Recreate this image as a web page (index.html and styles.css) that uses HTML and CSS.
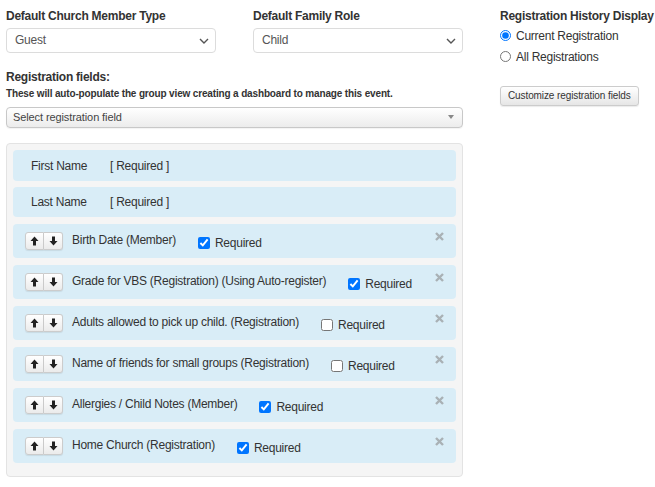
FILE: index.html
```html
<!DOCTYPE html>
<html>
<head>
<meta charset="utf-8">
<link rel="stylesheet" href="styles.css">
</head>
<body>
<div class="page">
  <div class="left">
    <div class="top-row">
      <div class="group">
        <div class="label">Default Church Member Type</div>
        <div class="select">Guest<svg class="chev" width="10" height="6" viewBox="0 0 10 6"><path d="M1 1l4 4 4-4" fill="none" stroke="#555" stroke-width="1.4"/></svg></div>
      </div>
      <div class="group">
        <div class="label">Default Family Role</div>
        <div class="select">Child<svg class="chev" width="10" height="6" viewBox="0 0 10 6"><path d="M1 1l4 4 4-4" fill="none" stroke="#555" stroke-width="1.4"/></svg></div>
      </div>
    </div>
    <div class="label reg-label">Registration fields:</div>
    <div class="help">These will auto-populate the group view creating a dashboard to manage this event.</div>
    <div class="chosen">Select registration field<span class="tri"></span></div>
    <div class="panel">
      <div class="row fixed"><span class="fname">First Name</span><span>[ Required ]</span></div>
      <div class="row fixed second"><span class="fname">Last Name</span><span>[ Required ]</span></div>

      <div class="row sort">
        <div class="btns"><span class="btn"><svg width="9" height="10" viewBox="0 0 9 10"><path d="M4.5 0.5L0.5 5H3V9.5H6V5H8.5Z" fill="#222"/></svg></span><span class="btn"><svg width="9" height="10" viewBox="0 0 9 10"><path d="M4.5 9.5L0.5 5H3V0.5H6V5H8.5Z" fill="#222"/></svg></span></div>
        <span class="name">Birth Date (Member)</span>
        <label class="req"><input type="checkbox" checked>Required</label>
        <svg class="close" width="9" height="9" viewBox="0 0 9 9"><path d="M1 1L8 8M8 1L1 8" stroke="#a9b1b5" stroke-width="2.4"/></svg>
      </div>
      <div class="row sort">
        <div class="btns"><span class="btn"><svg width="9" height="10" viewBox="0 0 9 10"><path d="M4.5 0.5L0.5 5H3V9.5H6V5H8.5Z" fill="#222"/></svg></span><span class="btn"><svg width="9" height="10" viewBox="0 0 9 10"><path d="M4.5 9.5L0.5 5H3V0.5H6V5H8.5Z" fill="#222"/></svg></span></div>
        <span class="name">Grade for VBS (Registration) (Using Auto-register)</span>
        <label class="req"><input type="checkbox" checked>Required</label>
        <svg class="close" width="9" height="9" viewBox="0 0 9 9"><path d="M1 1L8 8M8 1L1 8" stroke="#a9b1b5" stroke-width="2.4"/></svg>
      </div>
      <div class="row sort">
        <div class="btns"><span class="btn"><svg width="9" height="10" viewBox="0 0 9 10"><path d="M4.5 0.5L0.5 5H3V9.5H6V5H8.5Z" fill="#222"/></svg></span><span class="btn"><svg width="9" height="10" viewBox="0 0 9 10"><path d="M4.5 9.5L0.5 5H3V0.5H6V5H8.5Z" fill="#222"/></svg></span></div>
        <span class="name">Adults allowed to pick up child. (Registration)</span>
        <label class="req"><input type="checkbox">Required</label>
        <svg class="close" width="9" height="9" viewBox="0 0 9 9"><path d="M1 1L8 8M8 1L1 8" stroke="#a9b1b5" stroke-width="2.4"/></svg>
      </div>
      <div class="row sort">
        <div class="btns"><span class="btn"><svg width="9" height="10" viewBox="0 0 9 10"><path d="M4.5 0.5L0.5 5H3V9.5H6V5H8.5Z" fill="#222"/></svg></span><span class="btn"><svg width="9" height="10" viewBox="0 0 9 10"><path d="M4.5 9.5L0.5 5H3V0.5H6V5H8.5Z" fill="#222"/></svg></span></div>
        <span class="name">Name of friends for small groups (Registration)</span>
        <label class="req"><input type="checkbox">Required</label>
        <svg class="close" width="9" height="9" viewBox="0 0 9 9"><path d="M1 1L8 8M8 1L1 8" stroke="#a9b1b5" stroke-width="2.4"/></svg>
      </div>
      <div class="row sort">
        <div class="btns"><span class="btn"><svg width="9" height="10" viewBox="0 0 9 10"><path d="M4.5 0.5L0.5 5H3V9.5H6V5H8.5Z" fill="#222"/></svg></span><span class="btn"><svg width="9" height="10" viewBox="0 0 9 10"><path d="M4.5 9.5L0.5 5H3V0.5H6V5H8.5Z" fill="#222"/></svg></span></div>
        <span class="name">Allergies / Child Notes (Member)</span>
        <label class="req"><input type="checkbox" checked>Required</label>
        <svg class="close" width="9" height="9" viewBox="0 0 9 9"><path d="M1 1L8 8M8 1L1 8" stroke="#a9b1b5" stroke-width="2.4"/></svg>
      </div>
      <div class="row sort">
        <div class="btns"><span class="btn"><svg width="9" height="10" viewBox="0 0 9 10"><path d="M4.5 0.5L0.5 5H3V9.5H6V5H8.5Z" fill="#222"/></svg></span><span class="btn"><svg width="9" height="10" viewBox="0 0 9 10"><path d="M4.5 9.5L0.5 5H3V0.5H6V5H8.5Z" fill="#222"/></svg></span></div>
        <span class="name">Home Church (Registration)</span>
        <label class="req"><input type="checkbox" checked>Required</label>
        <svg class="close" width="9" height="9" viewBox="0 0 9 9"><path d="M1 1L8 8M8 1L1 8" stroke="#a9b1b5" stroke-width="2.4"/></svg>
      </div>
    </div>
  </div>
  <div class="right">
    <div class="label">Registration History Display</div>
    <label class="radio"><input type="radio" name="h" checked>Current Registration</label>
    <label class="radio"><input type="radio" name="h">All Registrations</label>
    <div class="button">Customize registration fields</div>
  </div>
</div>
</body>
</html>
```

FILE: styles.css
```css
* { box-sizing: border-box; }
body {
  margin: 0;
  font-family: "Liberation Sans", Arial, sans-serif;
  color: #333;
  font-size: 12px;
  letter-spacing: -0.25px;
  background: #fff;
}
.page {
  display: flex;
  padding: 7px 0 0 6px;
  gap: 37px;
}
.left { width: 457px; flex: none; }
.right { width: 155px; flex: none; }
.top-row {
  display: flex;
  gap: 37px;
}
.group { width: 210px; }
.label {
  font-weight: bold;
  font-size: 12px;
  line-height: 18px;
  margin-bottom: 3px;
  white-space: nowrap;
}
.select {
  position: relative;
  height: 25px;
  border: 1px solid #dcdcdc;
  border-radius: 4px;
  padding: 0 0 0 8px;
  line-height: 23px;
  color: #555;
  font-size: 12px;
}
.chev { position: absolute; right: 6px; top: 9px; }
.reg-label { margin-top: 15px; margin-bottom: 1px; }
.help {
  font-weight: bold;
  font-size: 10px;
  letter-spacing: -0.15px;
  line-height: 14px;
  margin-bottom: 6px;
}
.chosen {
  position: relative;
  height: 21px;
  border: 1px solid #c8c8c8;
  border-radius: 4px;
  background: linear-gradient(#ffffff, #ececec);
  font-size: 11px;
  letter-spacing: -0.1px;
  line-height: 19px;
  padding-left: 6px;
  color: #444;
  box-shadow: 0 1px 1px rgba(0,0,0,0.05);
}
.tri {
  position: absolute;
  right: 8px;
  top: 7px;
  width: 0; height: 0;
  border-left: 3px solid transparent;
  border-right: 3px solid transparent;
  border-top: 4px solid #888;
}
.panel {
  margin-top: 15px;
  width: 457px;
  border: 1px solid #e3e3e3;
  border-radius: 4px;
  background: #f5f5f5;
  padding: 6px 6px 6px 6px;
}
.row {
  position: relative;
  background: #d9edf7;
  border-radius: 4px;
  margin-bottom: 7px;
}
.fixed {
  height: 31px;
  padding-left: 18px;
  display: flex;
  align-items: center;
  margin-bottom: 6px;
}
.fixed.second { height: 30px; margin-bottom: 7px; }
.fname { width: 79px; }
.sort {
  height: 34px;
  display: flex;
  align-items: flex-start;
  padding: 8px 0 0 12px;
}
.btns { display: flex; }
.btn {
  width: 19px;
  height: 18px;
  display: flex;
  align-items: center;
  justify-content: center;
  border: 1px solid #ccc;
  background: linear-gradient(#fff, #ebebeb);
  box-shadow: 0 1px 1px rgba(0,0,0,0.08);
}
.btn:first-child { border-radius: 3px 0 0 3px; }
.btn:last-child { border-radius: 0 3px 3px 0; border-left: none; }
.name {
  margin-left: 9px;
  line-height: 16px;
}
.req {
  display: flex;
  align-items: center;
  margin-left: 22px;
  margin-top: 3px;
  line-height: 16px;
}
.req input {
  margin: 0 5px 0 0;
  width: 12px;
  height: 12px;
}
.close {
  position: absolute;
  right: 12px;
  top: 8px;
}
.right .label { margin-bottom: 0; }
.radio {
  display: flex;
  align-items: center;
  height: 21px;
}
.radio input {
  margin: 0 5px 0 0;
  width: 11px;
  height: 11px;
}
.button {
  margin-top: 19px;
  display: inline-block;
  border: 1px solid #ccc;
  border-radius: 3px;
  background: linear-gradient(#fff, #e6e6e6);
  font-size: 10px;
  letter-spacing: -0.1px;
  padding: 3px 7px;
  line-height: 12px;
  white-space: nowrap;
  color: #333;
  box-shadow: 0 1px 1px rgba(0,0,0,0.08);
}
```
